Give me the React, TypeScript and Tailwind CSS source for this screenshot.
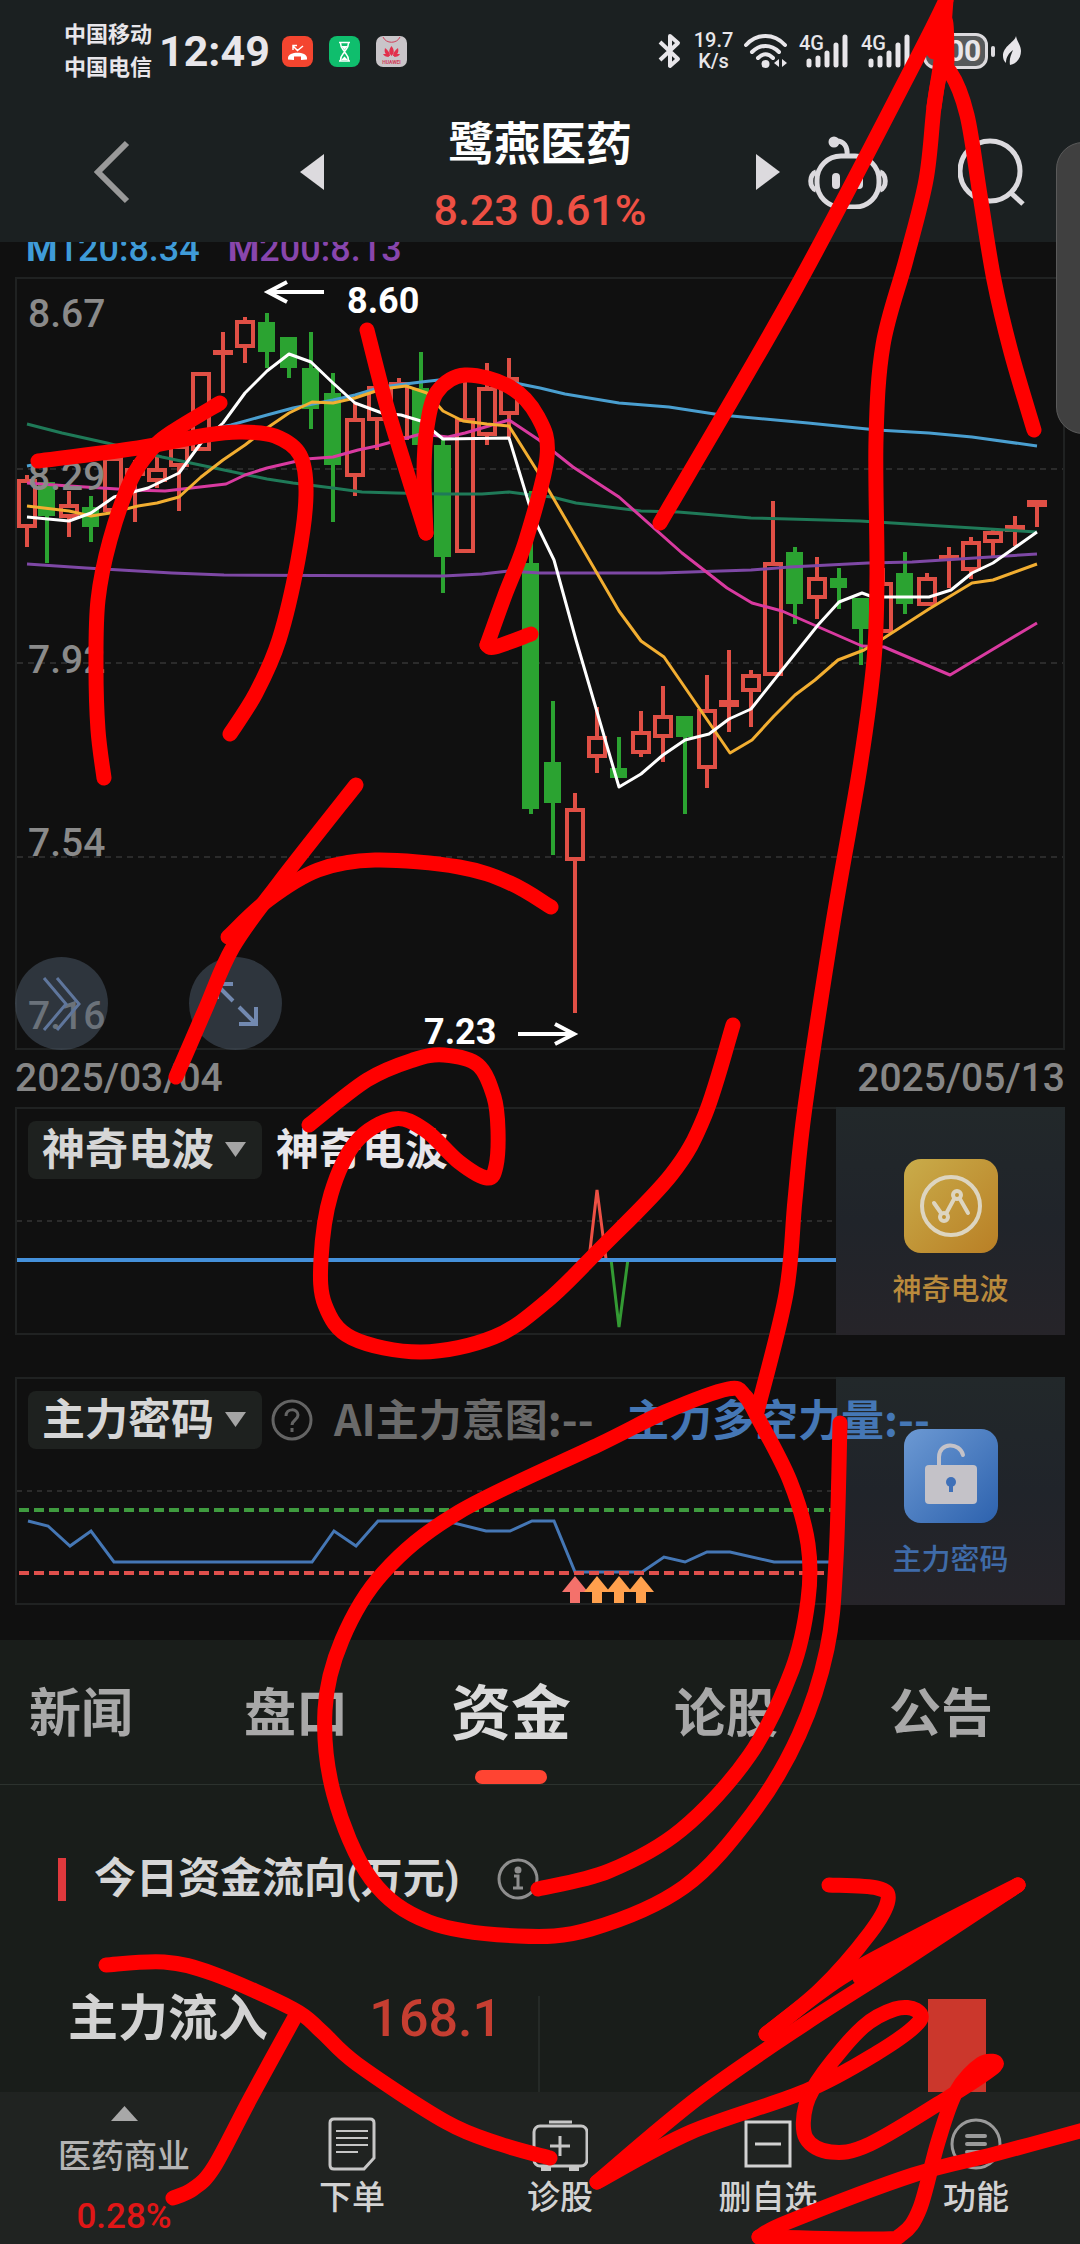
import type { ReactNode } from "react";

type Candle = {
    up: boolean;
    high: number;
    top: number;
    bottom: number;
    low: number;
};

type Point = [number, number];

const up = (high: number, top: number, bottom: number, low: number): Candle => ({ up: true, high, top, bottom, low });
const down = (high: number, top: number, bottom: number, low: number): Candle => ({ up: false, high, top, bottom, low });

// one candle every 22 units, first one centred on x = 25
const candles: Candle[] = [
    up(475, 479, 528, 547), down(482, 482, 516, 563), up(491, 504, 518, 537), down(496, 507, 527, 542),
    up(455, 457, 512, 530), up(460, 468, 476, 522), up(455, 468, 482, 488), up(440, 445, 467, 511),
    up(372, 372, 451, 451), up(332, 350, 354, 393), up(317, 320, 348, 363), down(313, 322, 352, 368),
    down(337, 337, 368, 378), down(332, 368, 409, 429), down(373, 393, 465, 522), up(403, 418, 477, 496),
    up(386, 386, 421, 450), up(378, 382, 440, 440), down(352, 388, 445, 445), down(437, 445, 557, 593),
    up(380, 418, 553, 553), up(363, 387, 436, 445), up(358, 377, 415, 437), down(491, 563, 809, 814),
    down(701, 762, 803, 855), up(793, 808, 861, 1013), up(707, 736, 758, 773), down(737, 768, 778, 778),
    up(711, 731, 754, 757), up(686, 715, 738, 762), down(716, 716, 737, 814), up(675, 709, 769, 788),
    up(650, 700, 707, 732), up(670, 674, 692, 727), up(501, 562, 676, 676), down(547, 552, 604, 624),
    up(557, 577, 599, 619), down(568, 578, 588, 609), down(598, 598, 629, 665), up(568, 582, 633, 633),
    down(552, 573, 604, 614), up(573, 577, 606, 606), up(547, 555, 559, 588), up(537, 541, 571, 579),
    up(530, 531, 543, 557), up(516, 525, 532, 546), up(500, 500, 507, 527),
];

const averages = [
    { color: "#4a9fd0", points: "27,466 110,450 180,436 231,425 267,415 293,408 333,400 355,395 382,387 421,382 448,379 505,381 540,388 565,394 619,403 669,407 721,415 808,423 877,430 929,433 972,437 1037,446" },
    { color: "#1f7a58", points: "27,424 62,433 107,443 162,457 224,470 267,479 293,483 333,488 362,492 396,493 443,494 482,494 509,492 532,495 552,497 576,503 641,511 678,512 751,518 860,521 1037,532" },
    { color: "#7e48a5", points: "27,564 86,568 172,573 224,575 443,576 482,574 509,571 540,573 660,573 751,570 790,567 868,563 912,562 1037,554" },
    { color: "#d93aa0", points: "27,483 69,486 134,490 165,491 200,487 226,484 245,475 267,468 306,459 333,457 358,450 377,446 421,434 448,437 465,433 509,420 539,440 573,467 619,497 682,553 727,588 752,603 782,611 862,646 884,647 950,675 1037,623" },
    { color: "#f2ae31", points: "27,506 69,511 91,516 110,513 138,506 157,503 179,497 201,477 223,460 245,445 267,428 289,413 312,402 333,403 355,398 382,389 406,386 427,393 443,411 463,421 487,424 509,426 541,477 619,611 641,641 664,657 730,753 752,740 774,716 795,695 815,680 838,660 864,650 884,638 929,609 972,583 993,580 1037,564" },
    { color: "#ffffff", points: "27,517 69,521 91,513 114,497 148,488 179,473 201,443 223,423 245,393 267,371 289,354 311,362 333,383 355,403 382,413 401,415 421,421 443,439 509,438 533,517 554,560 576,640 619,787 641,774 663,755 685,740 709,734 729,719 751,709 818,625 839,602 862,593 873,597 929,597 951,590 972,573 993,563 1037,532" },
];

const priceLabels = [
    { text: "8.67", y: 327 },
    { text: "8.29", y: 490 },
    { text: "7.92", y: 673 },
    { text: "7.54", y: 856 },
    { text: "7.16", y: 1029 },
];

// freehand marker strokes, split wherever the pen turns sharply
const strokes: Point[][] = [
    [[220, 403], [172, 432], [151, 450], [131, 480], [110, 540], [98, 600], [96, 667], [98, 730], [104, 778]],
    [[38, 461], [138, 448], [207, 435], [241, 432], [275, 436], [300, 455], [306, 495], [298, 560], [279, 640], [256, 693], [230, 734]],
    [[367, 330], [385, 400], [404, 463], [426, 533]],
    [[426, 533], [424, 473], [427, 427], [437, 392], [465, 375], [510, 387], [538, 417], [547, 457], [526, 540], [505, 595], [487, 645]],
    [[487, 645], [495, 647], [531, 634]],
    [[660, 523], [795, 290], [916, 60], [946, 0]],
    [[946, 0], [941, 60], [934, 107], [926, 180], [906, 260], [883, 345], [876, 440], [877, 573], [874, 660], [860, 767], [833, 923], [805, 1107], [795, 1200], [786, 1294], [757, 1412]],
    [[934, 52], [945, 20], [947, 62]],
    [[934, 107], [940, 75], [950, 72], [967, 115], [980, 195], [994, 280], [1011, 352], [1034, 430]],
    [[356, 785], [279, 883], [233, 947], [205, 1010], [176, 1077]],
    [[228, 937], [268, 900], [318, 870], [375, 860], [459, 867], [510, 883], [551, 907]],
    [[309, 1125], [367, 1080], [413, 1060], [444, 1055], [478, 1065], [494, 1097], [498, 1130], [496, 1166], [487, 1178], [459, 1162], [425, 1130], [394, 1119], [356, 1142], [331, 1194], [321, 1259], [325, 1305], [352, 1338], [421, 1352], [494, 1337], [547, 1301], [600, 1249], [671, 1175], [705, 1115], [733, 1025]],
    [[538, 1889], [609, 1871], [681, 1830], [749, 1756], [792, 1670], [808, 1600], [808, 1544], [790, 1481], [758, 1418], [745, 1396], [728, 1389], [665, 1412], [600, 1444], [459, 1512], [383, 1573], [342, 1640], [325, 1710], [334, 1795], [371, 1879], [429, 1922], [518, 1936], [591, 1929], [684, 1887], [752, 1814], [799, 1735], [827, 1649], [836, 1560], [840, 1423]],
    [[106, 1965], [164, 1962], [214, 1974], [293, 2009], [321, 2031], [357, 2064], [446, 2122], [500, 2144], [550, 2158]],
    [[296, 2015], [250, 2099], [214, 2167], [193, 2189], [173, 2198]],
    [[829, 1885], [877, 1888], [888, 1900], [870, 1933], [820, 1990], [766, 2034]],
    [[766, 2034], [841, 1978], [920, 1935], [1018, 1885]],
    [[1018, 1885], [906, 1959], [806, 2023], [699, 2097], [597, 2182]],
    [[1018, 1885], [940, 1934], [860, 1978]],
    [[597, 2182], [691, 2132], [806, 2091], [877, 2053], [918, 2023], [916, 2010], [895, 2009], [863, 2027], [824, 2072], [806, 2105], [806, 2138], [831, 2152], [870, 2144], [949, 2097], [995, 2066], [981, 2064], [956, 2092], [938, 2142], [920, 2208], [902, 2234], [877, 2239], [759, 2237]],
    [[759, 2237], [788, 2222], [913, 2175], [995, 2154], [1084, 2130]],
    [[962, 2086], [975, 2072], [993, 2066]],
];

// Catmull-Rom spline through the given points
function smooth(points: Point[]) {
    let d = `M${points[0].join(",")}`;
    for (let i = 0; i < points.length - 1; i++) {
        const p0 = points[i - 1] ?? points[i];
        const p1 = points[i];
        const p2 = points[i + 1];
        const p3 = points[i + 2] ?? p2;
        d += ` C${p1[0] + (p2[0] - p0[0]) / 6},${p1[1] + (p2[1] - p0[1]) / 6}`;
        d += ` ${p2[0] - (p3[0] - p1[0]) / 6},${p2[1] - (p3[1] - p1[1]) / 6} ${p2[0]},${p2[1]}`;
    }
    return d;
}

function Marker() {
    return (
        <svg
            viewBox="0 0 1080 2244"
            className="pointer-events-none absolute inset-x-0 top-0 w-full"
            fill="none"
            stroke="#ff0000"
            strokeWidth="15"
            strokeLinecap="round"
            strokeLinejoin="round"
            aria-hidden="true"
        >
            {strokes.map((points, i) => (
                <path key={i} d={smooth(points)} />
            ))}
        </svg>
    );
}

function Signal() {
    return (
        <svg className="overflow-visible" width="50" height="36" viewBox="0 0 50 36" fill="none" stroke="#e8e6ea" strokeLinecap="round" aria-hidden="true">
            <path d="M10 28v4M19 25v7M28 20v12M37 12v20M46 4v28" strokeWidth="5" />
            <text x="0" y="17" fill="#e8e6ea" stroke="none" className="text-[20px] font-medium">4G</text>
        </svg>
    );
}

function StatusBar() {
    return (
        <div className="flex h-[102px] items-center justify-between pl-[64px] pr-[59px] text-[#e8e6ea]">
            <div className="flex items-center">
                <div className="w-[95px] text-[22px] font-bold leading-[33px] whitespace-nowrap">
                    <p>中国移动</p>
                    <p>中国电信</p>
                </div>
                <span className="w-[123px] text-[43px] font-bold leading-[48px]">12:49</span>
                <div className="flex gap-4">
                    <svg width="31" height="31" viewBox="0 0 31 31" aria-hidden="true">
                        <rect width="31" height="31" rx="8" fill="#f4452f" />
                        <path d="M6 22c0-7 19-7 19 0v1.500l-6 .5v-3.500h-7v3.500l-6-.5z" fill="#fff" />
                        <path d="M11 14V9.500h4M11 10l4.500 4.500L21 10" fill="none" stroke="#fff" strokeWidth="1.500" />
                    </svg>
                    <svg width="31" height="31" viewBox="0 0 31 31" aria-hidden="true">
                        <rect width="31" height="31" rx="8" fill="#0fbe6d" />
                        <path d="M10 6.500h11M10 25h11M11.500 7c0 5 2.500 6 4 8.500c1.500-2.500 4-3.500 4-8.500M11.500 24.500c0-5 2.500-6 4-8.500c1.500 2.500 4 3.500 4 8.500" fill="none" stroke="#fff" strokeWidth="1.500" />
                        <path d="M12.500 10h6l-3 4zM12 24l3.500-3.500L19 24z" fill="#fff" />
                    </svg>
                    <svg width="31" height="31" viewBox="0 0 31 31" aria-hidden="true">
                        <rect width="31" height="31" rx="7" fill="#c9c5c9" />
                        <path d="M7 1c3 7 14 7 17 0" fill="none" stroke="#d0405a" />
                        <path d="M15.500 20c-3-3-3-6 0-10c3 4 3 7 0 10M14 20c-5-1-6-4-5-8c3 2 5 5 5 8M17 20c5-1 6-4 5-8c-3 2-5 5-5 8M13 21c-3 0-5-1-6-3h5M18 21c3 0 5-1 6-3h-5" fill="#e2304c" />
                        <text x="15.500" y="28" textAnchor="middle" fill="#d0405a" className="text-[5px] font-bold">HUAWEI</text>
                    </svg>
                </div>
            </div>
            <div className="flex items-center">
                <svg width="24" height="36" viewBox="0 0 24 36" fill="none" stroke="#e8e6ea" strokeWidth="4" strokeLinejoin="round" aria-hidden="true">
                    <path d="M2 9l18 17l-8 7V3l8 7L2 27" />
                </svg>
                <div className="ml-[10px] w-[43px] text-center text-[20px] font-medium leading-[21px]">
                    <p>19.7</p>
                    <p>K/s</p>
                </div>
                <svg className="ml-[8px]" width="46" height="36" viewBox="0 0 46 36" fill="none" stroke="#e8e6ea" strokeWidth="4" strokeLinecap="round" aria-hidden="true">
                    <path d="M3 12c11-12 28-12 39 0M9 19c8-8 19-8 27 0M15 25c5-5 10-5 15 0" />
                    <circle cx="22.500" cy="31" r="4" fill="#e8e6ea" stroke="none" />
                    <path d="M31 30l5-4v8zM44 30l-5-4v8z" fill="#e8e6ea" stroke="none" />
                </svg>
                <div className="ml-[10px] flex gap-[12px]">
                    <Signal />
                    <Signal />
                </div>
                <div className="ml-[12px] flex items-center gap-[3px]">
                    <span className="flex h-[36px] w-[65px] items-center justify-center rounded-[12px] border-[3px] border-[#dcdade] bg-[#56595b] text-[30px] font-bold leading-[30px]">
                        100
                    </span>
                    <span className="h-[11px] w-[4px] rounded-full bg-[#dcdade]" />
                </div>
                <svg className="ml-[8px]" width="18" height="30" viewBox="0 0 18 30" aria-hidden="true">
                    <path d="M13 0c-1 6-13 10-13 20c0 3 1 5 3 7c0-6 3-10 7-13c-2 5-4 9-3 15c8-2 11-8 11-14c0-6-4-9-5-15z" fill="#e8e6ea" />
                </svg>
            </div>
        </div>
    );
}

function TitleBar() {
    return (
        <div className="grid h-[140px] grid-cols-[1fr_480px_1fr] items-center">
            <div className="flex pl-[94px]">
                <button type="button" aria-label="返回">
                    <svg width="36" height="64" viewBox="0 0 36 64" fill="none" stroke="#999999" strokeWidth="6">
                        <path d="M33 3L4 32l29 29" />
                    </svg>
                </button>
            </div>
            <div className="flex items-center justify-between">
                <button type="button" aria-label="上一只">
                    <svg width="24" height="36" viewBox="0 0 24 36">
                        <path d="M24 0v36L0 18z" fill="#dcdade" />
                    </svg>
                </button>
                <div className="text-center whitespace-nowrap">
                    <h1 className="text-[46px] font-bold leading-[76px] text-white">鹭燕医药</h1>
                    <p className="text-[43px] font-medium leading-[56px] text-[#ee5044]">8.23 0.61%</p>
                </div>
                <button type="button" aria-label="下一只">
                    <svg width="24" height="36" viewBox="0 0 24 36">
                        <path d="M0 0v36l24-18z" fill="#dcdade" />
                    </svg>
                </button>
            </div>
            <div className="flex items-center pl-[28px]">
                <button type="button" aria-label="智能助手">
                    <svg width="80" height="74" viewBox="0 0 80 74" fill="none" stroke="#dcdade" strokeWidth="5">
                        <rect x="9" y="21" width="62" height="51" rx="24" />
                        <path d="M8 37c-7 2-7 16 0 18M72 37c7 2 7 16 0 18" />
                        <path d="M27 6c9-1 13 6 12 15" />
                        <circle cx="26" cy="7" r="3" fill="#dcdade" />
                        <path d="M28 42v8M51 42v8" strokeWidth="8" strokeLinecap="round" />
                    </svg>
                </button>
                <button type="button" aria-label="搜索" className="ml-[70px]">
                    <svg width="68" height="68" viewBox="0 0 68 68" fill="none" stroke="#dcdade" strokeWidth="5">
                        <circle cx="32" cy="33" r="30" />
                        <path d="M53 55l12 11" />
                    </svg>
                </button>
            </div>
        </div>
    );
}

function PriceChart() {
    return (
        <div className="relative">
            <svg viewBox="17 279 1046 769" className="block w-full border-2 border-[#202222]">
                <g stroke="#2b2b2b" strokeWidth="2" strokeDasharray="6 5">
                    <path d="M17 469h1046M17 663h1046M17 857h1046" />
                </g>
                {candles.map((c, i) => {
                    const x = 25 + i * 22 + (i === 0 ? 2 : 0);
                    const color = c.up ? "#e04f45" : "#2ba331";
                    return (
                        <g key={i} stroke={color} strokeWidth="4">
                            {c.high < c.top && <path d={`M${x} ${c.high}V${c.top}`} />}
                            {c.low > c.bottom && <path d={`M${x} ${c.bottom}V${c.low}`} />}
                            {c.up ? (
                                <rect x={x - 8} y={c.top + 2} width="16" height={Math.max(c.bottom - c.top - 4, 1)} fill="#101010" />
                            ) : (
                                <rect x={x - 9} y={c.top} width="17" height={c.bottom - c.top} fill={color} stroke="none" />
                            )}
                        </g>
                    );
                })}
                {averages.map((line) => (
                    <polyline key={line.color} points={line.points} fill="none" stroke={line.color} strokeWidth="3" strokeLinejoin="round" />
                ))}
                {priceLabels.map((label) => (
                    <text key={label.text} x="28" y={label.y} fill="#8a8a8a" className="text-[39px] font-medium">
                        {label.text}
                    </text>
                ))}
                <g fill="none" stroke="#ffffff" strokeWidth="4">
                    <path d="M324 292h-56M287 282l-19 10l19 10" />
                    <path d="M518 1034h56M555 1024l19 10l-19 10" />
                </g>
                <text x="347" y="313" fill="#ffffff" className="text-[36px] font-bold">8.60</text>
                <text x="424" y="1044" fill="#ffffff" className="text-[36px] font-bold">7.23</text>
            </svg>
            <button type="button" aria-label="展开" className="absolute bottom-0 left-0 flex size-[93px] items-center justify-center rounded-full bg-[#4c5a6a]/50">
                <svg width="42" height="56" viewBox="0 0 42 56" fill="none" stroke="#5f769c" strokeWidth="3">
                    <path d="M3 2l22 26L3 54M16 2l22 26l-22 26" />
                </svg>
            </button>
            <button type="button" aria-label="全屏" className="absolute bottom-0 left-[174px] flex size-[93px] items-center justify-center rounded-full bg-[#4c5a6a]/50">
                <svg width="46" height="46" viewBox="0 0 46 46" fill="none" stroke="#7289b0" strokeWidth="4">
                    <path d="M20 20L4 4M4 18V3h16M26 26l17 17M43 26v17H26" />
                </svg>
            </button>
        </div>
    );
}

function IndicatorSelect({ label }: { label: string }) {
    return (
        <span className="relative">
            <select aria-label="指标" className="block h-[58px] w-[234px] appearance-none rounded-[8px] bg-[#1e211f] pl-[14px] text-[43px] font-bold leading-[58px] text-[#d6d6d6]">
                <option>{label}</option>
            </select>
            <svg className="pointer-events-none absolute right-[16px] top-[21px]" width="21" height="15" viewBox="0 0 21 15" aria-hidden="true">
                <path d="M0 0h21L10.500 15z" fill="#a5a5a5" />
            </svg>
        </span>
    );
}

function PromoTile({ label, className, children }: { label: string; className: string; children: ReactNode }) {
    return (
        <button
            type="button"
            className={`flex h-full w-[229px] flex-col items-center bg-linear-to-b from-[#22282a] via-[#20242a] to-[#262429] pt-[52px] ${className}`}
        >
            {children}
            <span className="mt-[18px] text-[29px] font-medium leading-[38px]">{label}</span>
        </button>
    );
}

function WavePanel() {
    return (
        <div className="relative flex h-[228px]">
            <svg viewBox="17 1109 819 224" preserveAspectRatio="none" className="h-full min-w-0 flex-1 border-y-2 border-l-2 border-[#202222]" fill="none">
                <path d="M17 1221h820" stroke="#2b2b2b" strokeWidth="2" strokeDasharray="5 5" />
                <path d="M589 1259l8-69l9 69" stroke="#ee5044" strokeWidth="3" />
                <path d="M611 1259l8 68l9-68" stroke="#339a33" strokeWidth="3" />
                <path d="M15 1260h822" stroke="#4591db" strokeWidth="4" />
            </svg>
            <PromoTile label="神奇电波" className="text-[#b98a3c]">
                <svg width="94" height="94" viewBox="0 0 94 94" fill="none" stroke="#ddd5c0" strokeWidth="4">
                    <defs>
                        <linearGradient id="gold" x1="0" y1="0" x2="1" y2="1">
                            <stop offset="0" stopColor="#c9ac4a" />
                            <stop offset="1" stopColor="#b97f25" />
                        </linearGradient>
                    </defs>
                    <rect width="94" height="94" rx="17" fill="url(#gold)" stroke="none" />
                    <circle cx="47" cy="47" r="29" />
                    <path d="M30 44l7 10M43 53l7-13M56 40l8 14" strokeLinecap="round" />
                    <circle cx="40" cy="58" r="4" />
                    <circle cx="53" cy="36" r="4" />
                </svg>
            </PromoTile>
            <div className="absolute left-[13px] top-[14px] flex items-center gap-[14px] whitespace-nowrap">
                <IndicatorSelect label="神奇电波" />
                <span className="text-[43px] font-bold leading-[58px] text-[#e8e6ea]">神奇电波</span>
            </div>
        </div>
    );
}

function CodePanel() {
    return (
        <div className="relative mt-[42px] flex h-[228px]">
            <svg viewBox="17 1379 819 224" preserveAspectRatio="none" className="h-full min-w-0 flex-1 border-y-2 border-l-2 border-[#202222]" fill="none">
                <path d="M17 1491h820" stroke="#2b2b2b" strokeWidth="2" strokeDasharray="5 5" />
                <path d="M19 1510h813" stroke="#3f9b3f" strokeWidth="4" strokeDasharray="10 5" />
                <polyline
                    points="28,1521 48,1526 70,1546 91,1531 114,1562 312,1562 334,1531 356,1546 378,1521 446,1521 486,1531 510,1531 532,1521 554,1521 575,1572 642,1572 664,1557 685,1562 707,1552 730,1552 774,1562 831,1562"
                    stroke="#4577b5"
                    strokeWidth="3"
                />
                <path d="M19 1573h813" stroke="#e0504c" strokeWidth="4" strokeDasharray="10 5" />
                {[575, 597, 619, 641].map((x, i) => (
                    <path key={x} d={`M${x} 1576l13 16h-8v12h-10v-12h-8z`} fill={i === 0 ? "#f4716b" : "#ffa04d"} />
                ))}
            </svg>
            <PromoTile label="主力密码" className="text-[#3f6ba8]">
                <svg width="94" height="94" viewBox="0 0 94 94" fill="none">
                    <defs>
                        <linearGradient id="azure" x1="0" y1="0" x2="1" y2="1">
                            <stop offset="0" stopColor="#6c99d3" />
                            <stop offset="1" stopColor="#2d62ae" />
                        </linearGradient>
                    </defs>
                    <rect width="94" height="94" rx="17" fill="url(#azure)" />
                    <path d="M35 38V28c0-15 21-15 24-2" stroke="#c4c2c8" strokeWidth="4" strokeLinecap="round" />
                    <rect x="21" y="36" width="52" height="39" rx="4" fill="#c4c2c8" />
                    <circle cx="47" cy="53" r="5" fill="#3f70b8" />
                    <path d="M47 55v8" stroke="#3f70b8" strokeWidth="4" />
                </svg>
            </PromoTile>
            <div className="absolute left-[13px] top-[14px] flex items-center whitespace-nowrap text-[43px] font-bold leading-[58px]">
                <IndicatorSelect label="主力密码" />
                <button type="button" aria-label="说明" className="ml-[9px]">
                    <svg width="42" height="42" viewBox="0 0 42 42" fill="none" stroke="#646464" strokeWidth="3">
                        <circle cx="21" cy="21" r="19" />
                        <path d="M15 17c0-8 12-8 12-1c0 5-6 5-6 10M21 29v4" />
                    </svg>
                </button>
                <span className="ml-[21px] w-[292px] pb-[6px] font-['Noto_Sans_CJK_SC',sans-serif] leading-[52px] text-[#6a6a6a]">AI主力意图:--</span>
                <span className="pb-[6px] font-['Noto_Sans_CJK_SC',sans-serif] leading-[52px] text-[#4577b5]">主力多空力量:--</span>
            </div>
        </div>
    );
}

const tabs = ["新闻", "盘口", "资金", "论股", "公告"];

function Tabs() {
    return (
        <div className="mt-[35px] flex h-[145px] justify-between border-b border-[#2c322e] bg-[#191d1a] pl-[21px] pr-[79px]">
            {tabs.map((tab) =>
                tab === "资金" ? (
                    <button key={tab} type="button" className="flex w-[120px] flex-col items-center pt-[35px] text-[60px] font-bold leading-[80px] text-[#dadada]">
                        {tab}
                        <span className="mt-[15px] h-[14px] w-[72px] shrink-0 rounded-full bg-[#ff4432]" />
                    </button>
                ) : (
                    <button key={tab} type="button" className="flex w-[120px] flex-col items-center pt-[35px] text-[52px] font-bold leading-[80px] text-[#a8a8a8]">
                        {tab}
                    </button>
                )
            )}
        </div>
    );
}

function CapitalFlow() {
    return (
        <section className="flex-1 bg-[#191d1a] pt-[64px]">
            <div className="flex items-center pl-[58px]">
                <span className="h-[43px] w-[8px] bg-[#e0393d]" />
                <h2 className="ml-[28px] text-[42px] font-bold leading-[60px] text-[#d6d6d6]">今日资金流向(万元)</h2>
                <button type="button" aria-label="说明" className="ml-[38px]">
                    <svg width="42" height="42" viewBox="0 0 42 42" fill="none" stroke="#8e8e8e" strokeWidth="3">
                        <circle cx="21" cy="21" r="19" />
                        <path d="M17 18h4v12M16 30h10" />
                        <circle cx="21" cy="12" r="2" fill="#8e8e8e" />
                    </svg>
                </button>
            </div>
            <div className="mt-[87px] flex h-[96px]">
                <dl className="flex w-1/2 justify-between border-r-2 border-[#252a27] pl-[68px] pr-[36px] leading-[46px]">
                    <dt className="text-[50px] font-bold text-[#d2d2d2]">主力流入</dt>
                    <dd className="text-[52px] font-medium text-[#c63e31]">168.1</dd>
                </dl>
                <div className="flex w-1/2 justify-end pr-[94px] pt-[3px]">
                    <span className="w-[58px] bg-[#cb372c]" />
                </div>
            </div>
        </section>
    );
}

function NavButton({ label, children }: { label: string; children: ReactNode }) {
    return (
        <button type="button" className="flex flex-1 flex-col items-center gap-[2px] pt-[24px] text-[33px] font-medium leading-[44px] text-[#d2d2d2]">
            {children}
            {label}
        </button>
    );
}

function BottomNav() {
    return (
        <nav className="flex h-[153px] bg-[#202321]">
            <button type="button" className="flex w-[248px] flex-col items-center pt-[14px]">
                <svg width="27" height="15" viewBox="0 0 27 15" aria-hidden="true">
                    <path d="M0 15L13.500 0L27 15z" fill="#a8a8a8" />
                </svg>
                <span className="mt-[14px] text-[33px] font-medium leading-[44px] text-[#b4b4b4]">医药商业</span>
                <span className="mt-[16px] text-[35px] font-medium leading-[44px] text-[#e01616]">0.28%</span>
            </button>
            <NavButton label="下单">
                <svg width="48" height="58" viewBox="0 0 48 58" fill="none" stroke="#c6c6c6" strokeWidth="3">
                    <path d="M6 3h36q4 0 4 4v35L36 53H6q-4 0-4-4V7q0-4 4-4z" />
                    <path d="M8 15h32M8 22h32M8 29h32M8 36h22" strokeWidth="2" />
                </svg>
            </NavButton>
            <NavButton label="诊股">
                <svg width="56" height="58" viewBox="0 0 56 58" fill="none" stroke="#c6c6c6" strokeWidth="3">
                    <rect x="2" y="10" width="53" height="40" rx="6" />
                    <path d="M17 6h23M28 20v20M18 30h20" />
                    <path d="M9 53h10M37 53h10" strokeWidth="4" />
                </svg>
            </NavButton>
            <NavButton label="删自选">
                <svg width="48" height="58" viewBox="0 0 48 58" fill="none" stroke="#d2d2d2" strokeWidth="3">
                    <path d="M2 6h44v44H2zM11 28h26" />
                </svg>
            </NavButton>
            <NavButton label="功能">
                <svg width="52" height="58" viewBox="0 0 52 58" fill="none" stroke="#9a9a9a" strokeWidth="3">
                    <circle cx="26" cy="28" r="24" />
                    <path d="M17 20h18M17 28h18M17 36h18" strokeWidth="4" strokeLinecap="round" />
                </svg>
            </NavButton>
        </nav>
    );
}

export default function App() {
    return (
        <div className="relative flex min-h-screen flex-col overflow-hidden bg-[#101010] font-['Roboto','Noto_Sans_CJK_SC',sans-serif]">
            <header className="bg-[#1b2021]">
                <StatusBar />
                <TitleBar />
            </header>
            <main className="flex flex-1 flex-col">
                <div className="h-[35px] overflow-hidden pl-[26px]">
                    <div className="-mt-[13px] flex gap-[28px] text-[36px] font-medium leading-[40px]">
                        <span className="text-[#3f9bd8]"><b>M</b>120:8.34</span>
                        <span className="text-[#8846ad]"><b>M</b>200:8.13</span>
                    </div>
                </div>
                <div className="px-[15px]">
                    <PriceChart />
                    <div className="flex h-[57px] items-center justify-between text-[39px] font-medium leading-[57px] text-[#868686]">
                        <time>2025/03/04</time>
                        <time>2025/05/13</time>
                    </div>
                    <WavePanel />
                    <CodePanel />
                </div>
                <Tabs />
                <CapitalFlow />
            </main>
            <BottomNav />
            <div className="absolute -right-[30px] top-[142px] h-[292px] w-[54px] rounded-[40px] border border-[#5a5a5a] bg-[#404040]" />
            <Marker />
        </div>
    );
}
